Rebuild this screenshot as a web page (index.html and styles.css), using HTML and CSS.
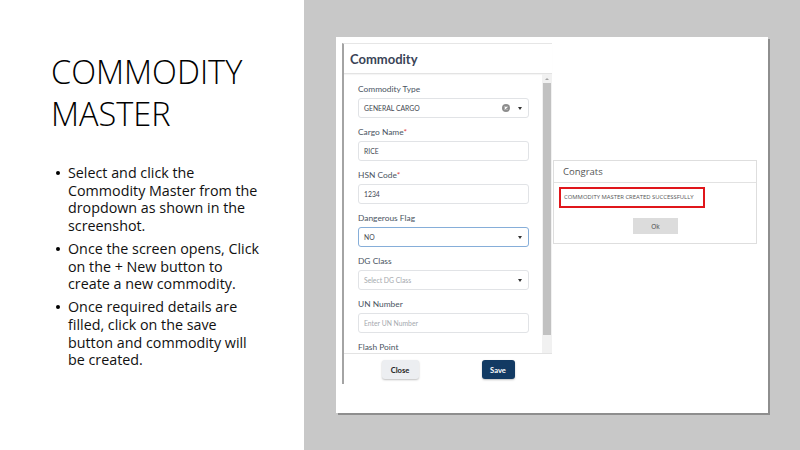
FILE: index.html
```html
<!DOCTYPE html>
<html>
<head>
<meta charset="utf-8">
<link rel="stylesheet" href="styles.css">
</head>
<body>
<div class="slide">
  <section class="left">
    <h1 class="title">COMMODITY<br>MASTER</h1>
    <ul class="bullets">
      <li>Select and click the Commodity Master from the dropdown as shown in the screenshot.</li>
      <li>Once the screen opens, Click on the + New button to create a new commodity.</li>
      <li>Once required details are filled, click on the save button and commodity will be created.</li>
    </ul>
  </section>
  <section class="right">
    <div class="shot">
      <div class="panel">
        <div class="panel-head">Commodity</div>
        <div class="panel-body">
          <div class="fields">
            <div class="field">
              <div class="label">Commodity Type</div>
              <div class="input select">
                <span class="val">GENERAL CARGO</span>
                <span class="clear"><svg width="8" height="8" viewBox="0 0 8 8"><circle cx="4" cy="4" r="4" fill="#8d8d8d"/><path d="M2.6 2.6 L5.4 5.4 M5.4 2.6 L2.6 5.4" stroke="#fff" stroke-width="1.1"/></svg></span>
                <span class="caret"></span>
              </div>
            </div>
            <div class="field">
              <div class="label">Cargo Name<span class="req">*</span></div>
              <div class="input"><span class="val">RICE</span></div>
            </div>
            <div class="field">
              <div class="label">HSN Code<span class="req">*</span></div>
              <div class="input"><span class="val">1234</span></div>
            </div>
            <div class="field">
              <div class="label">Dangerous Flag</div>
              <div class="input select focus"><span class="val">NO</span><span class="caret"></span></div>
            </div>
            <div class="field">
              <div class="label">DG Class</div>
              <div class="input select"><span class="val ph">Select DG Class</span><span class="caret"></span></div>
            </div>
            <div class="field">
              <div class="label">UN Number</div>
              <div class="input"><span class="val ph">Enter UN Number</span></div>
            </div>
            <div class="field">
              <div class="label">Flash Point</div>
              <div class="input"></div>
            </div>
          </div>
          <div class="scrollbar">
            <div class="arrow"></div>
            <div class="thumb"></div>
          </div>
        </div>
        <div class="panel-foot">
          <button class="btn close">Close</button>
          <button class="btn save">Save</button>
        </div>
      </div>
      <div class="dialog">
        <div class="dlg-head">Congrats</div>
        <div class="dlg-body">
          <div class="msg">COMMODITY MASTER CREATED SUCCESSFULLY</div>
          <div class="ok-row"><button class="ok">Ok</button></div>
        </div>
      </div>
    </div>
  </section>
</div>
</body>
</html>
```
FILE: styles.css
```css
* { box-sizing: border-box; }
html, body { margin: 0; padding: 0; }
body { width: 800px; height: 450px; overflow: hidden; background: #fff; }
.slide { display: flex; width: 800px; height: 450px; }

.left {
  width: 304px;
  background: #fff;
  padding: 51px 0 0 51px;
  font-family: "Open Sans", sans-serif;
  color: #000;
}
.title {
  margin: 0;
  font-weight: 300;
  font-size: 32.5px;
  line-height: 42px;
}
.bullets {
  list-style: none;
  margin: 29px 0 0 0;
  padding: 0 0 0 17px;
  width: 210px;
  font-size: 14.3px;
  line-height: 17.6px;
  color: #111;
}
.bullets li { position: relative; margin-bottom: 5.6px; }
.bullets li::before {
  content: "";
  position: absolute;
  left: -12px;
  top: 7px;
  width: 4px;
  height: 4px;
  border-radius: 50%;
  background: #000;
}

.right {
  flex: 1;
  background: #c8c8c8;
  padding: 37px 0 0 32px;
}
.shot {
  width: 432px;
  height: 376px;
  background: #fff;
  box-shadow: 2px 2px 0 #8e8e8e;
  display: flex;
  align-items: flex-start;
  padding: 6px 0 0 6px;
  font-family: Lato, "Open Sans", sans-serif;
}

.panel {
  width: 210px;
  height: 341px;
  border-left: 2px solid #a4a4a4;
  border-top: 1px solid #e6e6e6;
  display: flex;
  flex-direction: column;
}
.panel-head {
  height: 30px;
  padding: 7px 0 0 6px;
  font-weight: 700;
  font-size: 13px;
  line-height: 16px;
  color: #3a4457;
  border-bottom: 1px solid #e3e3e3;
  box-shadow: 0 1px 1px rgba(0,0,0,0.04);
}
.panel-body {
  height: 280px;
  display: flex;
  overflow: hidden;
  border-bottom: 1px solid #e3e3e3;
}
.fields {
  flex: 1;
  padding: 10px 0 0 14px;
  overflow: hidden;
}
.field { margin-bottom: 9px; }
.label {
  height: 10px;
  font-size: 8.4px;
  line-height: 10px;
  color: #4a5462;
  font-weight: 400;
  margin-bottom: 4px;
  white-space: nowrap;
}
.req { color: #e03c3c; }
.input {
  width: 171px;
  height: 20px;
  border: 1px solid #e1e3e6;
  border-radius: 3px;
  display: flex;
  align-items: center;
  padding: 0 6px 0 5px;
  font-size: 6.8px;
  color: #3f4650;
}
.input .val { flex: 1; white-space: nowrap; }
.input .ph { color: #a5a9ae; }
.input.focus { border-color: #86aed9; }
.clear { display: flex; margin-right: 8px; }
.caret {
  width: 0; height: 0;
  border-left: 2.5px solid transparent;
  border-right: 2.5px solid transparent;
  border-top: 3px solid #333;
}

.scrollbar {
  width: 10px;
  background: #f1f1f1;
  display: flex;
  flex-direction: column;
  align-items: center;
  padding-top: 4px;
}
.arrow {
  width: 0; height: 0;
  border-left: 2.5px solid transparent;
  border-right: 2.5px solid transparent;
  border-bottom: 2.5px solid #a3a3a3;
}
.thumb {
  width: 8px;
  height: 252px;
  margin-top: 3px;
  background: #c1c1c1;
}

.panel-foot {
  display: flex;
  justify-content: center;
  gap: 63px;
  padding-top: 6px;
}
.btn {
  height: 19px;
  border: none;
  border-radius: 3px;
  font-family: Lato, sans-serif;
  font-weight: 700;
  font-size: 7.6px;
  padding: 0;
  box-shadow: 0 1px 2px rgba(0,0,0,0.25);
}
.close { width: 37px; background: #eceef1; color: #222; }
.save { width: 33px; background: #123a63; color: #fff; }

.dialog {
  margin-top: 117px;
  margin-left: 1px;
  width: 204px;
  height: 84px;
  border: 1px solid #dedede;
  font-family: "Open Sans", sans-serif;
}
.dlg-head {
  height: 22px;
  padding: 4px 0 0 9px;
  font-size: 9.5px;
  line-height: 14px;
  color: #555;
  border-bottom: 1px solid #e2e2e2;
}
.dlg-body { padding: 4px 0 0 5px; }
.msg {
  width: 146px;
  height: 21px;
  border: 2px solid #e0161b;
  padding: 0 0 0 3px;
  font-size: 5.9px;
  line-height: 17px;
  color: #555;
  white-space: nowrap;
}
.ok-row { display: flex; padding: 10px 0 0 74px; }
.ok {
  width: 45px;
  height: 16px;
  border: none;
  background: #dcdcdc;
  color: #444;
  font-family: "Open Sans", sans-serif;
  font-size: 6.5px;
  padding: 0;
}
```
